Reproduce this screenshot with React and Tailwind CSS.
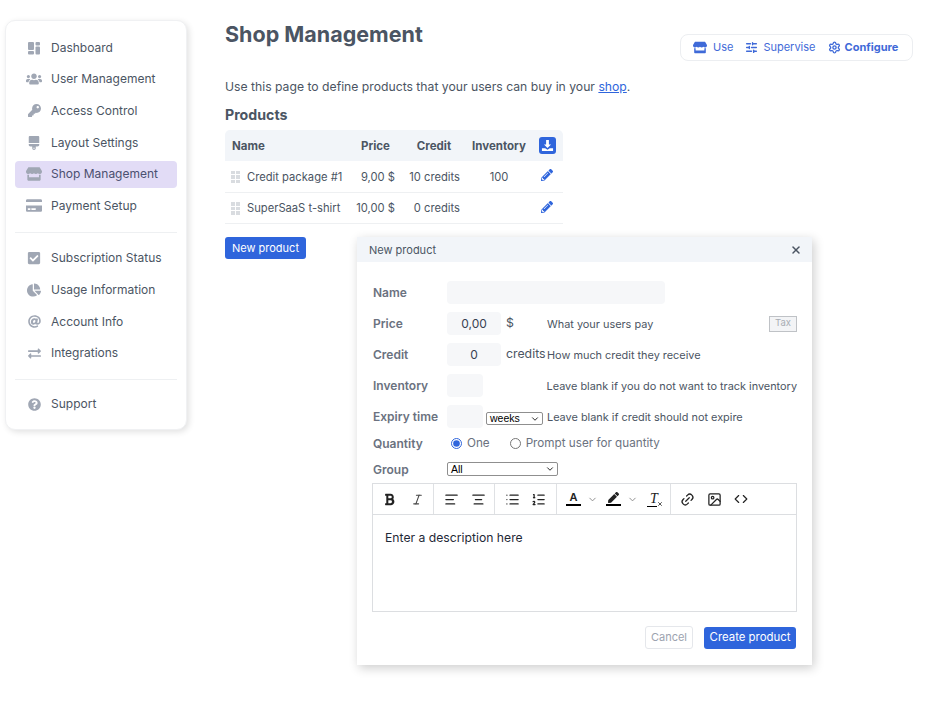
import React from 'react';
import {
  FaUsers, FaKey, FaBrush, FaStore, FaCreditCard, FaCheckSquare, FaChartPie, FaAt,
  FaExchangeAlt, FaQuestionCircle, FaPencilAlt, FaPen, FaBold,
} from 'react-icons/fa';
import { AlignLeft, AlignCenter, List, ListOrdered, Italic, Link2, Image, Code, ChevronDown, X, Settings, SlidersHorizontal } from 'lucide-react';

const DashboardIcon = ({ className }) => (
  <svg viewBox="0 0 14 14" className={className} fill="currentColor">
    <rect x="1" y="1" width="6" height="8" rx="1" />
    <rect x="1" y="10" width="6" height="3.5" rx="1" />
    <rect x="8.5" y="1" width="4.5" height="3.5" rx="1" />
    <rect x="8.5" y="5.5" width="4.5" height="8" rx="1" />
  </svg>
);

const menuTop = [
  { label: 'Dashboard', Icon: DashboardIcon, size: 'w-[14px] h-[14px]' },
  { label: 'User Management', Icon: FaUsers, size: 'w-[16px] h-[16px]' },
  { label: 'Access Control', Icon: FaKey, size: 'w-[13px] h-[13px]' },
  { label: 'Layout Settings', Icon: FaBrush, size: 'w-[12px] h-[14px]' },
  { label: 'Shop Management', Icon: FaStore, size: 'w-[16px] h-[14px]', active: true },
  { label: 'Payment Setup', Icon: FaCreditCard, size: 'w-[16px] h-[15px]' },
];

const menuMiddle = [
  { label: 'Subscription Status', Icon: FaCheckSquare, size: 'w-[14px] h-[14px]' },
  { label: 'Usage Information', Icon: FaChartPie, size: 'w-[14px] h-[14px]' },
  { label: 'Account Info', Icon: FaAt, size: 'w-[13px] h-[13px]' },
  { label: 'Integrations', Icon: FaExchangeAlt, size: 'w-[13px] h-[13px]' },
];

const MenuItem = ({ label, Icon, size, active }) => (
  <div className={`flex items-center h-[27px] rounded-[4px] ${active ? 'bg-[#e2dcf6] text-[#4b5070]' : 'text-[#4b5563]'}`}>
    <span className="w-[36px] flex justify-center pl-[2px] text-[#a0a7b4]">
      <Icon className={size} />
    </span>
    <span className="text-[12px]">{label}</span>
  </div>
);

const Sidebar = () => (
  <aside className="w-[182px] h-[410px] shrink-0 bg-white rounded-[10px] border border-[#f0f1f3] shadow-[2px_2px_6px_rgba(0,0,0,0.12)] px-[9px] pt-[13px]">
    <div className="flex flex-col gap-[4.7px]">
      {menuTop.map((m) => <MenuItem key={m.label} {...m} />)}
    </div>
    <div className="border-t border-[#eef0f2] mt-[13px] mb-[11px]" />
    <div className="flex flex-col gap-[4.8px]">
      {menuMiddle.map((m) => <MenuItem key={m.label} {...m} />)}
    </div>
    <div className="border-t border-[#eef0f2] mt-[12px] mb-[11px]" />
    <MenuItem label="Support" Icon={FaQuestionCircle} size="w-[13px] h-[13px]" />
  </aside>
);

const DragHandle = () => (
  <span className="inline-grid grid-cols-2 gap-[1px] w-[9px] shrink-0">
    {[0, 1, 2, 3, 4, 5].map((i) => <span key={i} className="w-[3.5px] h-[3.5px] bg-[#d9dce0]" />)}
  </span>
);

const Products = () => (
  <table className="w-[338px] table-fixed border-collapse text-[11.2px] text-[#4b5563]">
    <colgroup>
      <col className="w-[127px]" />
      <col className="w-[49px]" />
      <col className="w-[66px]" />
      <col className="w-[64px]" />
      <col className="w-[32px]" />
    </colgroup>
    <thead>
      <tr className="h-[31px] bg-[#f2f5f9] font-bold text-[11.5px]">
        <th className="pl-[7px] pt-[2px] text-left rounded-tl-[5px]">Name</th>
        <th className="text-left pl-[9px] pt-[2px]">Price</th>
        <th className="text-center pt-[2px]">Credit</th>
        <th className="text-center pt-[2px] whitespace-nowrap">Inventory</th>
        <th className="rounded-tr-[5px]">
          <span className="inline-flex w-[17px] h-[17px] ml-[1px] bg-[#2f65dc] rounded-[3px] items-center justify-center align-middle">
            <svg viewBox="0 0 14 14" className="w-[13px] h-[13px]" fill="white">
              <path d="M5.5 1h3v5h2.3L7 9.8 3.2 6h2.3z" />
              <path d="M1 10h3.5L7 11.5 9.5 10H13v3H1z" />
            </svg>
          </span>
        </th>
      </tr>
    </thead>
    <tbody>
      <tr className="h-[31px] border-b border-[#eef0f2]">
        <td className="pl-[6px] pt-[2px]"><div className="flex items-center gap-[7px] whitespace-nowrap"><DragHandle />Credit package #1</div></td>
        <td className="text-right pr-[6px] pt-[2px] whitespace-nowrap">9,00 $</td>
        <td className="text-right pr-[7px] pt-[2px] whitespace-nowrap">10 credits</td>
        <td className="text-center pt-[2px]">100</td>
        <td><FaPencilAlt className="w-[12px] h-[12px] ml-[10px] mb-[2px] text-[#2f65dc]" /></td>
      </tr>
      <tr className="h-[31px] border-b border-[#eef0f2]">
        <td className="pl-[6px] pt-[2px]"><div className="flex items-center gap-[7px] whitespace-nowrap"><DragHandle />SuperSaaS t-shirt</div></td>
        <td className="text-right pr-[6px] pt-[2px] whitespace-nowrap">10,00 $</td>
        <td className="text-right pr-[7px] pt-[2px] whitespace-nowrap">0 credits</td>
        <td />
        <td><FaPencilAlt className="w-[12px] h-[12px] ml-[10px] mb-[2px] text-[#2f65dc]" /></td>
      </tr>
    </tbody>
  </table>
);

const Row = ({ label, className = 'h-[31px]', children }) => (
  <div className={`flex items-center ${className}`}>
    <span className="w-[74px] shrink-0 text-[12px] font-semibold text-[#6b7280] whitespace-nowrap">{label}</span>
    {children}
  </div>
);

const Field = ({ className = '', children }) => (
  <div className={`h-[23px] pt-[1px] bg-[#f6f7f9] rounded-[4px] flex items-center justify-center text-[12px] text-[#374151] ${className}`}>{children}</div>
);

const Hint = ({ children }) => <span className="pt-[2px] text-[10.9px] text-[#4b5563] whitespace-nowrap">{children}</span>;

const Sep = () => <span className="w-px self-stretch bg-[#dfe1e4]" />;

// native select can't be squeezed to 13px without clipping its text
const TinySelect = ({ value, className }) => (
  <span className={`relative flex items-center shrink-0 border border-[#8f8f8f] rounded-[2px] bg-white pl-[3px] text-[10.5px] leading-none text-black font-['Liberation_Sans',sans-serif] ${className}`}>
    {value}
    <ChevronDown className="absolute right-[2px] top-[1px] w-[10px] h-[10px]" strokeWidth={2} />
  </span>
);

const Toolbar = () => (
  <div className="flex h-[32px] border border-[#dcdee1] text-[#222] items-stretch">
    <div className="w-[60px] flex items-center gap-[16px] pl-[11px]">
      <FaBold className="w-[11px] h-[13px]" />
      <Italic className="w-[13px] h-[13px] text-[#444]" />
    </div>
    <Sep />
    <div className="w-[60px] flex items-center gap-[12px] pl-[10px]">
      <AlignLeft className="w-[15px] h-[15px]" />
      <AlignCenter className="w-[15px] h-[15px]" />
    </div>
    <Sep />
    <div className="w-[61px] flex items-center gap-[11px] pl-[10px]">
      <List className="w-[15px] h-[15px]" />
      <ListOrdered className="w-[15px] h-[15px]" />
    </div>
    <Sep />
    <div className="w-[113px] flex items-center pl-[9px]">
      <span className="flex flex-col items-center w-[15px] leading-none">
        <span className="text-[11px] font-semibold">A</span>
        <span className="w-[15px] h-[2px] bg-black mt-[1px]" />
      </span>
      <ChevronDown className="w-[11px] h-[11px] ml-[6px] text-[#888]" />
      <span className="flex flex-col items-center w-[15px] ml-[8px]">
        <FaPen className="w-[11px] h-[11px]" />
        <span className="w-[15px] h-[2px] bg-black mt-[1px]" />
      </span>
      <ChevronDown className="w-[11px] h-[11px] ml-[6px] text-[#888]" />
      <span className="relative flex flex-col items-center w-[14px] ml-[9px] leading-none">
        <span className="text-[14px] italic font-['Liberation_Serif',serif]">T</span>
        <span className="w-[10px] h-px bg-black -ml-[4px]" />
        <X className="absolute right-[-2px] bottom-0 w-[6px] h-[6px]" strokeWidth={3} />
      </span>
    </div>
    <Sep />
    <div className="flex items-center gap-[12px] pl-[9px]">
      <Link2 className="w-[15px] h-[15px] -rotate-45" />
      <Image className="w-[15px] h-[15px]" />
      <Code className="w-[14px] h-[14px]" />
    </div>
  </div>
);

const NewProductDialog = () => (
  <div className="absolute left-[357px] top-[237px] w-[455px] h-[428px] bg-white shadow-[2px_3px_10px_rgba(0,0,0,0.2)]">
    <div className="h-[25px] bg-[#f2f5f9] flex items-center justify-between pl-[12px] pr-[10px] text-[11px] text-[#4b5563]">
      <span className="mt-[1px]">New product</span>
      <X className="w-[12px] h-[12px] text-[#4b5563]" strokeWidth={3} />
    </div>
    <div className="pl-[16px] pr-[15px] pt-[15px]">
      <Row label="Name"><Field className="w-[218px]" /></Row>
      <Row label="Price">
        <Field className="w-[54px]">0,00</Field>
        <span className="w-[46px] pl-[5px] text-[12.3px] text-[#4b5563]">$</span>
        <Hint>What your users pay</Hint>
        <span className="ml-auto w-[28px] h-[16px] border border-[#bfc2c6] bg-[#f3f4f6] text-[9.5px] text-[#a8adb4] flex items-center justify-center">Tax</span>
      </Row>
      <Row label="Credit">
        <Field className="w-[54px]">0</Field>
        <span className="w-[46px] pl-[5px] text-[12.3px] text-[#4b5563]">credits</span>
        <Hint>How much credit they receive</Hint>
      </Row>
      <Row label="Inventory">
        <Field className="w-[36px]" />
        <span className="w-[64px]" />
        <Hint>Leave blank if you do not want to track inventory</Hint>
      </Row>
      <Row label="Expiry time">
        <Field className="w-[36px]" />
        <TinySelect value="weeks" className="ml-[3px] mt-[3px] w-[57px] h-[13px] mr-[4px]" />
        <Hint>Leave blank if credit should not expire</Hint>
      </Row>
      <Row label="Quantity" className="h-[23px]">
        <label className="flex items-center pt-[1px] text-[11.7px] text-[#6b7280] ml-[4px]">
          <input type="radio" name="qty" defaultChecked className="w-[11px] h-[11px] accent-[#2f65dc]" />
          <span className="ml-[5px]">One</span>
        </label>
        <label className="flex items-center pt-[1px] text-[11.7px] text-[#6b7280] ml-[20px]">
          <input type="radio" name="qty" className="w-[11px] h-[11px]" />
          <span className="ml-[5px]">Prompt user for quantity</span>
        </label>
      </Row>
      <Row label="Group" className="h-[28px] pt-[1px]">
        <TinySelect value="All" className="w-[111px] h-[14px] -mt-[1px]" />
      </Row>
      <div className="-ml-px">
        <Toolbar />
        <div className="h-[97px] border border-t-0 border-[#dcdee1] px-[12px] pt-[14px] text-[12.2px] text-[#1f2937]">
          Enter a description here
        </div>
      </div>
      <div className="flex justify-end items-center gap-[11px] mt-[14px] pr-px">
        <span className="w-[48px] h-[23px] border border-[#e5e7eb] rounded-[3px] text-[11px] text-[#9ca3af] flex items-center justify-center">Cancel</span>
        <span className="w-[92px] h-[22px] bg-[#2f65dc] rounded-[3px] text-[11.4px] text-white flex items-center justify-center">Create product</span>
      </div>
    </div>
  </div>
);

const App = () => (
  <div className="relative w-[930px] h-[707px] bg-white overflow-hidden font-['Inter',sans-serif] flex pl-[5px] pt-[20px]">
    <Sidebar />
    <main className="ml-[38px] flex-1 -mt-[20px] pr-[17px]">
      <div className="flex justify-between">
        <h1 className="mt-[20px] text-[21.5px] leading-[28px] font-bold text-[#4b5563]">Shop Management</h1>
        <div className="mt-[34px] h-[27px] w-[233px] border border-[#eceef1] rounded-[8px] flex items-center pl-[12px] text-[11px] text-[#3f6ad8]">
          <FaStore className="w-[14px] h-[13px]" />
          <span className="ml-[6px]">Use</span>
          <SlidersHorizontal className="w-[13px] h-[13px] ml-[12px]" strokeWidth={2.5} />
          <span className="ml-[5px]">Supervise</span>
          <Settings className="w-[13px] h-[13px] ml-[12px]" strokeWidth={2.5} />
          <span className="ml-[4px] font-bold">Configure</span>
        </div>
      </div>
      <p className="mt-[17px] text-[12.2px] leading-[18px] text-[#4b5563]">
        Use this page to define products that your users can buy in your <a className="text-[#2f65dc] underline">shop</a>.
      </p>
      <h2 className="mt-[9px] text-[14.2px] leading-[20px] font-bold text-[#4b5563]">Products</h2>
      <div className="mt-[5px]"><Products /></div>
      <button className="mt-[13px] block w-[81px] h-[22px] pt-[1px] bg-[#2f65dc] rounded-[3px] text-[11px] text-white">New product</button>
    </main>
    <NewProductDialog />
  </div>
);

export default App;
